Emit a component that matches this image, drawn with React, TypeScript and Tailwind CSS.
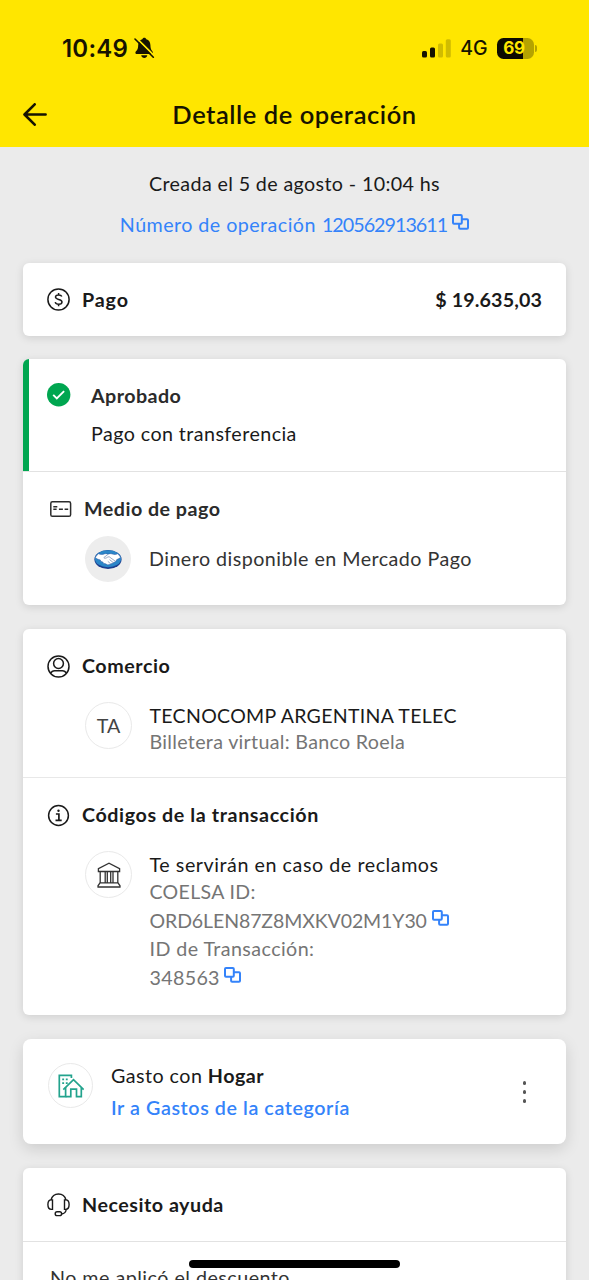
import type { ReactNode } from 'react';

interface SectionTitleProps {
  icon: ReactNode;
  children: ReactNode;
  className?: string;
}

function SectionTitle({ icon, children, className = '' }: SectionTitleProps) {
  return (
    <div className="flex items-center">
      <span className="flex w-[35px] shrink-0">{icon}</span>
      <h2 className={`leading-6 font-bold whitespace-nowrap ${className}`}>{children}</h2>
    </div>
  );
}

function Avatar({ children, className = '' }: { children: ReactNode; className?: string }) {
  return (
    <div className={`flex shrink-0 items-center justify-center rounded-full ${className}`}>
      {children}
    </div>
  );
}

function CopyIcon({ className = '' }: { className?: string }) {
  return (
    <svg width="17" height="16" viewBox="0 0 17 16" fill="none" stroke="currentColor" strokeWidth="2" className={className}>
      <rect x="1" y="1" width="8.8" height="8.8" rx="1" />
      <path d="M9.9 5.2h5.100a1 1 0 0 1 1 1v7.600a1 1 0 0 1-1 1H8.100a1 1 0 0 1-1-1V9.900" />
    </svg>
  );
}

function BellOffIcon() {
  return (
    <svg width="21" height="22" viewBox="0 0 21 22">
      <path
        fill="#161300"
        d="M10.300.7c1 0 1.800.6 2 1.500 2.600.8 4 2.900 4.100 5.700.1 3 .5 4.500 1.600 5.900.8 1 1 1.400 1 2 0 .8-.6 1.300-1.500 1.300H2.900c-.9 0-1.500-.5-1.500-1.300 0-.7.3-1.100 1.100-2 1.200-1.500 1.600-2.900 1.700-5.900.1-2.800 1.500-4.900 4.100-5.700.2-.9 1-1.500 2-1.500ZM7.200 18.300h6.100c-.3 1.700-1.500 2.700-3 2.700s-2.800-1-3.100-2.700Z"
      />
      <path d="M2.500 1.200 20 18.500" stroke="#ffe600" strokeWidth="1.800" />
      <path d="M1 2 19.300 20.200" stroke="#161300" strokeWidth="1.600" strokeLinecap="round" />
    </svg>
  );
}

function SignalIcon() {
  return (
    <svg width="29" height="19" viewBox="0 0 29 19" fill="#161300">
      <rect x="0" y="12" width="5" height="6.500" rx="1.500" />
      <rect x="8" y="8.500" width="5" height="10" rx="1.500" />
      <rect x="16" y="4.500" width="5" height="14" rx="1.500" opacity="0.2" />
      <rect x="23.800" y="0.300" width="5" height="18.200" rx="1.500" opacity="0.2" />
    </svg>
  );
}

function Battery() {
  return (
    <div className="flex items-center gap-px">
      <div className="flex h-[21px] w-[37px] items-center justify-center rounded-[6.500px] bg-linear-to-r from-[#0d0b00] from-70% to-[#b5a300] to-70%">
        <span className="pr-0.5 text-[17px] leading-none font-bold tracking-[-0.2px] text-[#ffe600]">69</span>
      </div>
      <div className="h-[7px] w-[2.500px] rounded-r-full bg-[#b5a300]" />
    </div>
  );
}

function BackIcon() {
  return (
    <svg width="24" height="23" viewBox="0 0 24 23" fill="none" stroke="#161300" strokeWidth="2.600" strokeLinecap="round" strokeLinejoin="round">
      <path d="M11.700 1.300 1.500 11.500 11.700 21.700M1.700 11.500H22.600" />
    </svg>
  );
}

function DollarIcon() {
  return (
    <svg width="23" height="23" viewBox="0 0 23 23" fill="none" stroke="#1a1a1a" strokeWidth="1.500">
      <circle cx="11.500" cy="11.500" r="10.600" />
      <path d="M14.800 8.600C14.400 7.500 13.200 6.900 11.600 6.900c-1.900 0-3.100.8-3.100 2.200 0 3.200 6.500 1.400 6.500 4.800 0 1.500-1.300 2.300-3.300 2.300-1.900 0-3.100-.8-3.500-2.100M11.600 4.900v2M11.600 16.200v2" />
    </svg>
  );
}

function ApprovedIcon() {
  return (
    <svg width="24" height="24" viewBox="0 0 24 24" fill="none">
      <circle cx="11.700" cy="11.700" r="11.700" fill="#00a650" />
      <path d="m6.200 11.800 3.600 3.600 7.300-7.300" stroke="#fff" strokeWidth="1.900" />
    </svg>
  );
}

function CardIcon() {
  return (
    <svg width="22" height="17" viewBox="0 0 22 17" fill="none" stroke="#2b2b2b" strokeWidth="1.500">
      <rect x="0.800" y="0.800" width="19.800" height="14.500" rx="1.600" />
      <path d="M3.300 5.700h4M3.300 8.300h3.300M8.900 8.300h4M14.600 8.300h3.600" />
    </svg>
  );
}

function HandshakeLogo() {
  return (
    <svg width="28" height="20" viewBox="0 0 28 20">
      <ellipse cx="14" cy="10.500" rx="13.600" ry="9.400" fill="#1d3f8f" />
      <ellipse cx="14" cy="9.700" rx="13.100" ry="8.500" fill="#2a86c8" />
      <path
        d="M1.300 8.300 4.300 4.700c2 .9 4 .9 6.100.2 1.300-.4 2.500-.3 3.600.3 1.300-.7 2.800-.7 4.200-.2 2 .7 3.700.7 5.600-.3l2.900 3.600c-1 1-2.400 1.700-4.100 2.400l-.7 1.700-1.700.9-1.700.9-1.800.8-1.600.7-1.800.1-1.700-1-1.900-.4-1-1.500-1.800-.5-.6-1.500c-2-.4-4-1.200-5-2.600Z"
        fill="#fff"
        stroke="#27519f"
        strokeWidth="0.500"
      />
      <path d="M13.900 5.500 9.800 8.600c.7 1 2.200.8 3.700-.4l1.600-.5 6.600 4.800M15.500 10.600l3.800 3M13.800 12.300l2.800 2.500" fill="none" stroke="#55709f" strokeWidth="0.600" />
    </svg>
  );
}

function PersonIcon() {
  return (
    <svg width="23" height="23" viewBox="0 0 23 23" fill="none" stroke="#1a1a1a" strokeWidth="1.500">
      <circle cx="11.500" cy="11.500" r="10.500" />
      <circle cx="11.500" cy="8.500" r="4.900" />
      <path d="M3.700 18.500c.8-1.900 2-2.700 3.900-2.700h7.800c1.900 0 3.100.8 3.900 2.700" />
    </svg>
  );
}

function InfoIcon() {
  return (
    <svg width="23" height="23" viewBox="0 0 23 23" fill="none" stroke="#1a1a1a" strokeWidth="1.500">
      <circle cx="11.500" cy="11.500" r="9.900" />
      <path d="M8.900 10h3v6M8.500 16.300h6.200" strokeWidth="1.700" />
      <circle cx="11.500" cy="6.800" r="1.200" fill="#1a1a1a" stroke="none" />
    </svg>
  );
}

function BankIcon() {
  return (
    <svg width="24" height="26" viewBox="0 0 24 26" fill="none" stroke="#333" strokeWidth="1.300">
      <path d="M1.400 9.500V6.600L12 1.200l10.600 5.400v2.900ZM3.200 9.700v11M8.200 9.700v11M10.300 9.700v11M13.700 9.700v11M16 9.700v11M20.800 9.700v11M2.900 20.900h18.200M1 25v-1.200l2-2.900M23 25v-1.200l-2-2.900M.4 25h23.200" />
    </svg>
  );
}

function HomeIcon() {
  return (
    <svg width="26" height="24" viewBox="0 0 26 24" fill="none" stroke="#23a38d" strokeWidth="1.700">
      <path d="M13.400 4V1.300H1.300v21.400h6.300V13.200" />
      <path d="m5.300 15.600 10.200-10 10.200 10M23.300 13.500v9.200h-4.800v-7.500h-5.700v7.500H7.600" />
      <path d="M4.200 5.300h1.900M7.800 5.300h1.900M4.200 9.100h1.900M7.800 9.100h1.900" />
    </svg>
  );
}

function HeadsetIcon() {
  return (
    <svg width="23" height="24" viewBox="0 0 23 24" fill="none" stroke="#1a1a1a" strokeWidth="1.400">
      <path d="M4 7C5 3.200 8 1 11.500 1S18 3.200 19 7" />
      <path d="M5.500 6.900H4.300C2.100 6.900.9 8.600.9 11.600s1.200 4.800 3.400 4.800h1.200ZM17.500 6.900h1.200c2.200 0 3.400 1.700 3.400 4.700s-1.200 4.800-3.400 4.800h-1.200Z" />
      <path d="M19.200 16.500c-.3 2.600-1.800 4.100-4.600 4.500" />
      <rect x="8.200" y="18.800" width="6.400" height="3.800" rx="1.900" />
    </svg>
  );
}

export default function App() {
  return (
    <div className="relative flex h-[1280px] w-[589px] flex-col overflow-hidden bg-[#ebebeb] font-['Lato',sans-serif] text-[19.7px] leading-6 text-[#1a1a1a]">
      <header className="h-[147px] shrink-0 bg-[#ffe600] text-[#161300]">
        <div className="flex h-[82px] items-end justify-between pr-[52px] pl-[62px] font-['Inter',sans-serif]">
          <div className="flex h-[68px] items-center gap-1.5">
            <span className="pt-0.5 text-[24px] leading-none font-semibold tracking-[0.2px]">10:49</span>
            <BellOffIcon />
          </div>
          <div className="flex h-[68px] items-center">
            <SignalIcon />
            <span className="mr-[9px] ml-[9px] pt-0.5 text-[19.500px] leading-none font-medium">4G</span>
            <Battery />
          </div>
        </div>
        <div className="flex h-[65px] items-center px-[23px]">
          <BackIcon />
          <h1 className="flex-1 pr-6 pb-0.5 text-center text-[25.500px] leading-8 font-semibold tracking-[0.550px]">
            Detalle de operación
          </h1>
        </div>
      </header>

      <main className="px-[23px]">
        <div className="flex flex-col items-center pt-[25px] whitespace-nowrap">
          <p className="tracking-[0.370px]">Creada el 5 de agosto - 10:04 hs</p>
          <p className="mt-[17px] flex text-[#3483fa]">
            <span className="tracking-[0.450px]">Número de operación</span>
            <span className="ml-1.5 tracking-[-0.980px]">120562913611</span>
            <CopyIcon className="mt-px ml-[5px]" />
          </p>
        </div>

        <section className="mt-[26px] flex h-[73px] items-center justify-between rounded-md bg-white px-6 shadow-[0_2px_8px_rgba(0,0,0,0.12)]">
          <SectionTitle icon={<DollarIcon />} className="tracking-[0.850px]">Pago</SectionTitle>
          <span className="font-bold tracking-[0.120px]">$ 19.635,03</span>
        </section>

        <section className="mt-[23px] h-[246px] overflow-hidden rounded-md bg-white shadow-[0_2px_8px_rgba(0,0,0,0.12)]">
          <div className="flex h-[112px] border-l-6 border-[#00a650] pt-6 pl-[18px]">
            <ApprovedIcon />
            <div className="pl-5">
              <h2 className="leading-[26px] font-bold tracking-[0.420px] text-[#2b2b2b]">Aprobado</h2>
              <p className="mt-3 leading-[26px] tracking-[0.430px]">Pago con transferencia</p>
            </div>
          </div>
          <div className="h-[134px] border-t-[1.500px] border-[#e2e2e2] pt-[25px] pl-[27px]">
            <div className="flex items-center">
              <span className="w-[34px]">
                <CardIcon />
              </span>
              <h2 className="font-bold tracking-[0.480px] text-[#2b2b2b]">Medio de pago</h2>
            </div>
            <div className="mt-[15px] flex items-center pl-[35px]">
              <Avatar className="size-[46px] bg-[#ededed]">
                <HandshakeLogo />
              </Avatar>
              <p className="pl-[18px] tracking-[0.460px] text-[#333]">Dinero disponible en Mercado Pago</p>
            </div>
          </div>
        </section>

        <section className="mt-6 h-[386px] rounded-md bg-white shadow-[0_2px_8px_rgba(0,0,0,0.12)]">
          <div className="h-[148px] px-6 pt-[25px]">
            <SectionTitle icon={<PersonIcon />} className="tracking-[0.550px]">Comercio</SectionTitle>
            <div className="mt-6 flex pl-[38px]">
              <Avatar className="size-[47px] border border-[#e9e9e9] text-[#444]">TA</Avatar>
              <div className="pt-px pl-[17.500px] leading-[26px]">
                <p className="text-[19.500px] tracking-[0.320px]">TECNOCOMP ARGENTINA TELEC</p>
                <p className="tracking-[0.300px] text-[#757575]">Billetera virtual: Banco Roela</p>
              </div>
            </div>
          </div>
          <div className="border-t border-[#e8e8e8] px-6 pt-[25px]">
            <SectionTitle icon={<InfoIcon />} className="tracking-[0.600px]">Códigos de la transacción</SectionTitle>
            <div className="mt-6 flex pl-[38px]">
              <Avatar className="size-[47px] border border-[#e9e9e9]">
                <BankIcon />
              </Avatar>
              <div className="pt-px pl-[17.500px] text-[#757575]">
                <p className="leading-[26px] tracking-[0.550px] text-[#1a1a1a]">Te servirán en caso de reclamos</p>
                <p className="text-[19.500px] leading-[27px] tracking-[0.350px]">COELSA ID:</p>
                <p className="flex text-[19.500px] leading-[31px] tracking-[-0.100px]">
                  ORD6LEN87Z8MXKV02M1Y30
                  <CopyIcon className="mt-[5px] ml-[5px] text-[#3483fa]" />
                </p>
                <p className="leading-[26px] tracking-[0.420px]">ID de Transacción:</p>
                <p className="flex leading-[31px] tracking-[0.300px]">
                  348563
                  <CopyIcon className="mt-[5px] ml-1 text-[#3483fa]" />
                </p>
              </div>
            </div>
          </div>
        </section>

        <section className="mt-6 flex h-[105px] rounded-lg bg-white pt-6 pr-10 pl-[25px] shadow-[0_5px_15px_rgba(0,0,0,0.13)]">
          <Avatar className="size-[45px] border border-[#e9e9e9]">
            <HomeIcon />
          </Avatar>
          <div className="flex-1 pt-px pl-[18px]">
            <p className="tracking-[0.460px]">
              Gasto con <b className="font-bold">Hogar</b>
            </p>
            <a className="mt-2 block font-semibold tracking-[0.590px] text-[#3483fa]">Ir a Gastos de la categoría</a>
          </div>
          <div className="mt-[18px] flex flex-col gap-[5.500px]">
            <span className="size-[3.500px] rounded-full bg-[#555]" />
            <span className="size-[3.500px] rounded-full bg-[#555]" />
            <span className="size-[3.500px] rounded-full bg-[#555]" />
          </div>
        </section>

        <section className="mt-6 h-[150px] rounded-md bg-white shadow-[0_2px_8px_rgba(0,0,0,0.12)]">
          <div className="flex h-[74px] items-center border-b border-[#e2e2e2] px-6">
            <SectionTitle icon={<HeadsetIcon />} className="tracking-[0.520px]">Necesito ayuda</SectionTitle>
          </div>
          <p className="pt-6 pl-[27px] tracking-[0.480px] text-[#333]">No me aplicó el descuento</p>
        </section>
      </main>

      <div className="absolute bottom-3 left-[189px] h-2 w-[211px] rounded-full bg-black" />
    </div>
  );
}
